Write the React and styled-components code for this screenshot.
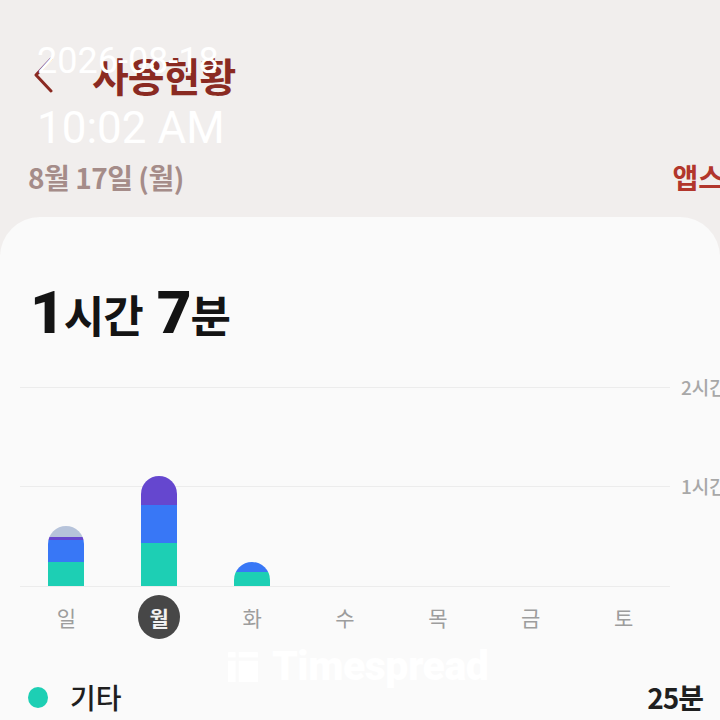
import React from "react";
import styled, { createGlobalStyle } from "styled-components";

const Global = createGlobalStyle`
  html, body { margin: 0; padding: 0; background: #f1eeed; }
  body { font-family: "Noto Sans CJK KR", "Noto Sans", sans-serif; }
  * { box-sizing: border-box; }
`;

const Screen = styled.div`
  position: relative;
  width: 720px;
  height: 720px;
  overflow: hidden;
  background: #f1eeed;
  display: flex;
  flex-direction: column;
`;

const Header = styled.header`
  display: flex;
  flex-direction: column;
  flex-shrink: 0;
  padding: 0 0 0 28px;
  height: 217px;
`;

const TitleRow = styled.div`
  display: flex;
  align-items: center;
  height: 60px;
  margin-top: 45px;
  gap: 38px;
  padding-left: 4px;
`;

const Title = styled.h1`
  margin: 0;
  font-size: 40px;
  font-weight: 700;
  color: #8a2a22;
  letter-spacing: -1px;
`;

const SubRow = styled.div`
  display: flex;
  align-items: center;
  justify-content: space-between;
  margin-top: 52px;
`;

const DateText = styled.span`
  font-size: 28px;
  font-weight: 600;
  color: #a58c89;
  letter-spacing: -0.5px;
`;

const AppsLink = styled.span`
  font-size: 28px;
  font-weight: 700;
  color: #b2362c;
  margin-right: -4px;
`;

const Card = styled.main`
  flex: 1;
  background: #fafafa;
  border-radius: 40px 40px 0 0;
  display: flex;
  flex-direction: column;
  position: relative;
`;

const Total = styled.div`
  display: flex;
  align-items: baseline;
  padding: 66px 0 0 30px;
  color: #141414;
  line-height: 1;
`;

const Num = styled.span`
  font-family: "Roboto", "Noto Sans", sans-serif;
  font-weight: 900;
  font-size: 60px;
  letter-spacing: -1px;
`;

const Unit = styled.span`
  font-size: 44px;
  font-weight: 700;
  margin-right: ${(p) => p.$gap || 0}px;
  letter-spacing: -1px;
`;

const ChartRow = styled.div`
  display: flex;
  margin-top: 44px;
  padding-left: 20px;
`;

const Plot = styled.div`
  flex-shrink: 0;
  width: 650px;
  height: 200px;
  border-top: 1px solid #ececec;
  border-bottom: 1px solid #ececec;
  background: linear-gradient(#ececec, #ececec) 0 98px / 100% 1px no-repeat;
  display: grid;
  grid-template-columns: repeat(7, 1fr);
  align-items: end;
`;

const Slot = styled.div`
  display: flex;
  justify-content: center;
  align-items: flex-end;
  height: 100%;
`;

const Bar = styled.div`
  width: 36px;
  border-radius: 18px 18px 0 0;
  overflow: hidden;
  display: flex;
  flex-direction: column;
`;

const Seg = styled.div`
  background: ${(p) => p.$c};
`;

const Axis = styled.div`
  display: flex;
  flex-direction: column;
  padding-left: 11px;
  font-size: 19px;
  color: #a8a8a8;
  font-weight: 500;
  line-height: 20px;
`;

const AxisLabel = styled.span`
  margin-top: ${(p) => p.$mt}px;
  white-space: nowrap;
`;

const Days = styled.div`
  display: grid;
  grid-template-columns: repeat(7, 1fr);
  width: 650px;
  margin-left: 20px;
  margin-top: 8px;
`;

const Day = styled.div`
  display: flex;
  justify-content: center;
`;

const DayLabel = styled.span`
  width: 42px;
  height: 44px;
  border-radius: 50%;
  display: flex;
  align-items: center;
  justify-content: center;
  font-size: 21px;
  color: ${(p) => (p.$active ? "#f2f2f2" : "#9d9d9d")};
  background: ${(p) => (p.$active ? "#474747" : "transparent")};
  font-weight: ${(p) => (p.$active ? 700 : 400)};
`;

const Legend = styled.div`
  display: flex;
  align-items: center;
  padding: 0 17px 0 28px;
  margin-top: 38px;
`;

const Dot = styled.span`
  width: 20px;
  height: 21px;
  border-radius: 50%;
  background: ${(p) => p.$c};
  margin-right: 22px;
`;

const LegendName = styled.span`
  flex: 1;
  font-size: 28px;
  color: #1f1f1f;
  font-weight: 500;
`;

const LegendValue = styled.span`
  font-size: 28px;
  color: #1f1f1f;
  font-weight: 600;
  letter-spacing: -1px;
`;

const Stamp = styled.div`
  position: absolute;
  left: 37px;
  top: 38px;
  color: #ffffff;
  font-family: "Roboto", "Noto Sans", sans-serif;
  font-weight: 400;
  display: flex;
  flex-direction: column;
  pointer-events: none;
`;

const StampDate = styled.span`
  font-size: 36px;
  line-height: 46px;
`;

const StampTime = styled.span`
  font-size: 44px;
  line-height: 52px;
  margin-top: 18px;
`;

const Watermark = styled.div`
  position: absolute;
  left: 228px;
  top: 642px;
  display: flex;
  align-items: center;
  gap: 14px;
  color: #ffffff;
  font-family: "Roboto", "Noto Sans", sans-serif;
  font-weight: 900;
  font-size: 41px;
  letter-spacing: -0.5px;
`;

const COLORS = {
  teal: "#1dcfb4",
  blue: "#3877f6",
  purple: "#6547cf",
  gray: "#b6c3da",
};

const bars = [
  [["gray", 11], ["purple", 3], ["blue", 22], ["teal", 24]],
  [["purple", 29], ["blue", 38], ["teal", 43]],
  [["blue", 10], ["teal", 14]],
  [],
  [],
  [],
  [],
];

const days = ["일", "월", "화", "수", "목", "금", "토"];

function Back() {
  return (
    <svg width="22" height="36" viewBox="0 0 22 36" fill="none">
      <path d="M19 2 L4 18 L19 34" stroke="#8a2a22" strokeWidth="3" strokeLinecap="round" strokeLinejoin="round" />
    </svg>
  );
}

function Logo() {
  return (
    <svg width="30" height="32" viewBox="0 0 28 30" fill="#ffffff">
      <rect x="0" y="2" width="7" height="5" />
      <rect x="10" y="2" width="18" height="5" />
      <rect x="0" y="10" width="7" height="20" />
      <rect x="10" y="10" width="18" height="20" />
    </svg>
  );
}

export default function App() {
  return (
    <Screen>
      <Global />
      <Header>
        <TitleRow>
          <Back />
          <Title>사용현황</Title>
        </TitleRow>
        <SubRow>
          <DateText>8월 17일 (월)</DateText>
          <AppsLink>앱스</AppsLink>
        </SubRow>
      </Header>
      <Card>
        <Total>
          <Num>1</Num>
          <Unit $gap={14}>시간</Unit>
          <Num>7</Num>
          <Unit>분</Unit>
        </Total>
        <ChartRow>
          <Plot>
            {bars.map((segs, i) => (
              <Slot key={i}>
                {segs.length > 0 && (
                  <Bar>
                    {segs.map(([c, h], j) => (
                      <Seg key={j} $c={COLORS[c]} style={{ height: h }} />
                    ))}
                  </Bar>
                )}
              </Slot>
            ))}
          </Plot>
          <Axis>
            <AxisLabel $mt={-10}>2시간</AxisLabel>
            <AxisLabel $mt={79}>1시간</AxisLabel>
          </Axis>
        </ChartRow>
        <Days>
          {days.map((d, i) => (
            <Day key={d}>
              <DayLabel $active={i === 1}>{d}</DayLabel>
            </Day>
          ))}
        </Days>
        <Legend>
          <Dot $c={COLORS.teal} />
          <LegendName>기타</LegendName>
          <LegendValue>25분</LegendValue>
        </Legend>
      </Card>
      <Watermark>
        <Logo />
        <span>Timespread</span>
      </Watermark>
      <Stamp>
        <StampDate>2026-08-18</StampDate>
        <StampTime>10:02 AM</StampTime>
      </Stamp>
    </Screen>
  );
}
